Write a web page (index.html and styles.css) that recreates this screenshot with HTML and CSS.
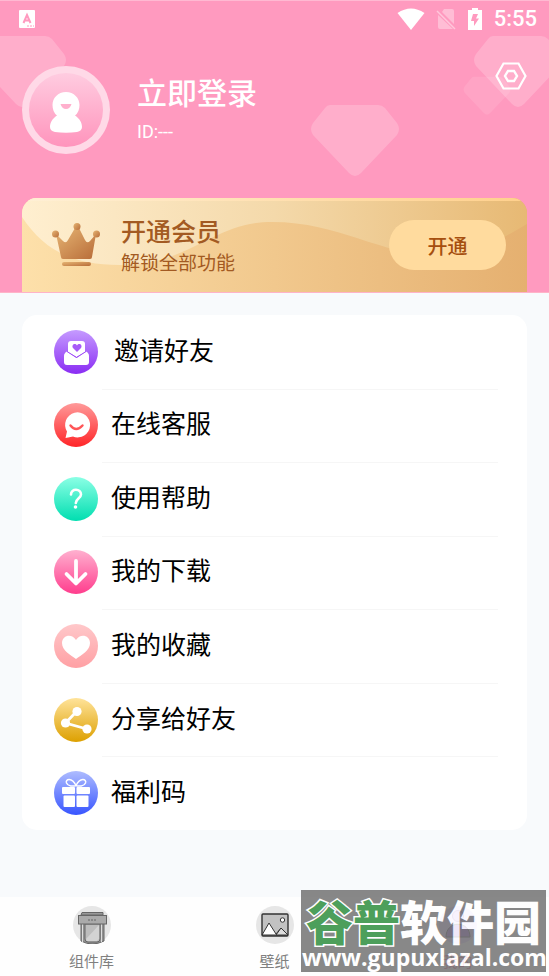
FILE: index.html
```html
<!DOCTYPE html>
<html lang="zh-CN">
<head>
<meta charset="utf-8">
<meta name="viewport" content="width=device-width, initial-scale=1">
<title>我的</title>
<link rel="stylesheet" href="styles.css">
</head>
<body>
<header class="hero">
  <svg class="gem gem-left" viewBox="0 0 90 74" aria-hidden="true"><use href="#gem"/></svg>
  <svg class="gem gem-center" viewBox="0 0 90 74" aria-hidden="true"><path id="gem" d="M20 1H68Q72 1 75 4L87 19Q91 25 87 31L51 69Q45 75 39 69L3 31Q-1 25 3 19L15 4Q17 1 20 1Z" fill="#fff" fill-opacity=".2"/></svg>
  <svg class="gem gem-right" viewBox="0 0 90 74" aria-hidden="true"><use href="#gem"/></svg>
  <svg class="gem gem-small" viewBox="0 0 90 74" aria-hidden="true"><use href="#gem"/></svg>

  <div class="status">
    <svg class="status-app" width="18" height="18" viewBox="0 0 18 18" aria-hidden="true"><rect x="1" width="16" height="18" rx="1" fill="#fff"/><path d="M5.500 13 9 5 12.500 13M6.500 10.500H11.500" fill="none" stroke="#ff9abf" stroke-width="2"/><path d="M9 16H16" stroke="#ff9abf" stroke-dasharray="2 1"/></svg>
    <svg width="28" height="22" viewBox="0 0 28 22" aria-hidden="true"><path d="M.500 5Q14-4 27.500 5L14 22Z" fill="#fff"/></svg>
    <svg width="20" height="22" viewBox="0 0 20 22" aria-hidden="true"><path d="M8 1H16Q18 1 18 3V16L6 4ZM2 7 17 21H4Q2 21 2 19Z" fill="#fff" opacity=".35"/><path d="M1 3 19 21" stroke="#fff" stroke-width="1.500" opacity=".45"/></svg>
    <svg width="16" height="22" viewBox="0 0 16 22" aria-hidden="true"><path d="M5 0H11V2H15V22H1V2H5Z" fill="#fff"/><path d="M6 6H11L9 10.500H12L7 18V13H4Z" fill="#ff9abf"/></svg>
    <time class="clock">5:55</time>
  </div>

  <div class="profile">
    <svg class="avatar" viewBox="0 0 88 88" role="img" aria-label="头像">
      <defs><linearGradient id="av" x2="0" y2="1"><stop stop-color="#ffcce0"/><stop offset="1" stop-color="#ff94bc"/></linearGradient></defs>
      <circle cx="44" cy="44" r="44" fill="#ffd9e7"/><circle cx="44" cy="44" r="37" fill="url(#av)"/>
      <path d="M44 26C36 26 30.500 32 30.500 39Q30.500 46 35 49.500C30 53 28 57 28 61Q28 65 33 66Q44 67.500 55 66Q60 65 60 61C60 57 58 53 53 49.500Q57.500 46 57.500 39C57.500 32 52 26 44 26Z" fill="#fff"/><path d="M38.500 38H49.500Q48 43 44 43T38.500 38Z" fill="#ffb0cd"/>
    </svg>
    <div class="who"><h1>立即登录</h1><p>ID:---</p></div>
    <button class="settings" type="button" aria-label="设置"><svg width="32" height="28" viewBox="0 0 32 28" aria-hidden="true"><g fill="none" stroke="#fff" stroke-width="2.200"><path d="M8.500 1.500H23.500L30.500 14 23.500 26.500H8.500L1.500 14Z"/><path d="M13 9H19L22 14 19 19H13L10 14Z" stroke-width="2.400"/></g></svg></button>
  </div>

  <section class="vip">
    <svg class="vip-wave" viewBox="0 0 505 94" preserveAspectRatio="none" aria-hidden="true">
      <defs><linearGradient id="wv"><stop stop-color="#ffefd0"/><stop offset=".5" stop-color="#f4d9aa"/><stop offset="1" stop-color="#e7b974"/></linearGradient></defs>
      <path d="M0 0H505V26C480 40 455 58 420 57C360 59 320 24 250 24C190 24 170 67 98 67C50 67 22 52 0 19Z" fill="url(#wv)"/>
    </svg>
    <svg class="crown" viewBox="0 0 48 44" aria-hidden="true">
      <defs><linearGradient id="cr" x2="1" y2="1"><stop stop-color="#e6b574"/><stop offset="1" stop-color="#b86c38"/></linearGradient></defs>
      <g fill="url(#cr)"><path d="M4 11 11 18Q14 21 16 17L23 5H27L33 17Q35 21 38 18L44 11 40 34Q40 36 38 36H11Q9 36 9 34Z"/><circle cx="3.500" cy="11" r="3.500"/><circle cx="25" cy="3.500" r="3.500"/><circle cx="44.500" cy="11" r="3.500"/><rect x="10" y="39" width="29" height="4" rx="2"/></g>
    </svg>
    <div class="vip-text"><h2>开通会员</h2><p>解锁全部功能</p></div>
    <button class="vip-button" type="button">开通</button>
  </section>
</header>

<main class="content">
  <ul class="menu">
    <li><a class="row row-first" href="#invite"><svg class="icon" viewBox="0 0 44 44" aria-hidden="true"><defs><linearGradient id="g1" x2="0" y2="1"><stop stop-color="#c59bff"/><stop offset="1" stop-color="#8a2df3"/></linearGradient></defs><circle cx="22" cy="22" r="22" fill="url(#g1)"/><path d="M14 22V14Q14 11 17 11H28Q31 11 31 14V22L22.500 27Z" fill="#fff"/><path d="M23 22 19 18C17 15 21 12 23 15.500C25 12 29 15 27 18Z" fill="#a75af8"/><path d="M13 21.500 22.500 28 32 21.500Q35 23 35 26V32Q35 35 32 35H13Q10 35 10 32V26Q10 23 13 21.500Z" fill="#fff"/><path d="M13 21.500 22.500 27.500 32 21.500" fill="none" stroke="#9c49f6"/></svg><span>邀请好友</span></a></li>
    <li><a class="row" href="#service"><svg class="icon" viewBox="0 0 44 44" aria-hidden="true"><defs><linearGradient id="g2" x2="0" y2="1"><stop stop-color="#ff9a9a"/><stop offset="1" stop-color="#ff2528"/></linearGradient></defs><circle cx="22" cy="22" r="22" fill="url(#g2)"/><path d="M11.500 35 13 28.500A12.500 12.500 0 1 1 19 33.500Z" fill="#fff"/><path d="M16.500 22.500Q22 29.500 28.500 22.500" fill="none" stroke="#ff5557" stroke-width="2.400" stroke-linecap="round"/></svg><span>在线客服</span></a></li>
    <li><a class="row" href="#help"><svg class="icon" viewBox="0 0 44 44" aria-hidden="true"><defs><linearGradient id="g3" x2="0" y2="1"><stop stop-color="#8bffe5"/><stop offset="1" stop-color="#00deb0"/></linearGradient></defs><circle cx="22" cy="22" r="22" fill="url(#g3)"/><path d="M17 17.500C17 11 27 11.500 27 17.500C27 21 22 21.500 21.800 26" fill="none" stroke="#fff" stroke-width="2.600" stroke-linecap="round"/><circle cx="21.500" cy="30" r="1.800" fill="#fff"/></svg><span>使用帮助</span></a></li>
    <li><a class="row" href="#downloads"><svg class="icon" viewBox="0 0 44 44" aria-hidden="true"><defs><linearGradient id="g4" x2="0" y2="1"><stop stop-color="#ffb0cf"/><stop offset="1" stop-color="#ff3d8d"/></linearGradient></defs><circle cx="22" cy="22" r="22" fill="url(#g4)"/><path d="M22 11V33M12.500 24 22 33.500 31.500 24" fill="none" stroke="#fff" stroke-width="3.800" stroke-linecap="round" stroke-linejoin="round"/></svg><span>我的下载</span></a></li>
    <li><a class="row" href="#favorites"><svg class="icon" viewBox="0 0 44 44" aria-hidden="true"><defs><linearGradient id="g5" x2="0" y2="1"><stop stop-color="#ffc8ca"/><stop offset="1" stop-color="#ffa0a4"/></linearGradient></defs><circle cx="22" cy="22" r="22" fill="url(#g5)"/><path d="M22 35C17 31 8 27 8 19C8 11 18 9 22 16C26 9 36 11 36 19C36 27 27 31 22 35Z" fill="#fff"/></svg><span>我的收藏</span></a></li>
    <li><a class="row" href="#share"><svg class="icon" viewBox="0 0 44 44" aria-hidden="true"><defs><linearGradient id="g6" x2="0" y2="1"><stop stop-color="#ffe39a"/><stop offset="1" stop-color="#dda000"/></linearGradient></defs><circle cx="22" cy="22" r="22" fill="url(#g6)"/><path d="M23 13 11.500 25 33 31" fill="none" stroke="#fff" stroke-width="2.800"/><g fill="#fff"><circle cx="23" cy="13.500" r="4.600"/><circle cx="11.500" cy="25" r="4.600"/><circle cx="33" cy="31" r="4.600"/></g></svg><span>分享给好友</span></a></li>
    <li><a class="row" href="#gift"><svg class="icon" viewBox="0 0 44 44" aria-hidden="true"><defs><linearGradient id="g7" x2="0" y2="1"><stop stop-color="#aebcff"/><stop offset="1" stop-color="#3855ff"/></linearGradient></defs><circle cx="22" cy="22" r="22" fill="url(#g7)"/><g fill="none" stroke="#fff" stroke-width="1.500"><path d="M22 14.500C18 6 11 8 12.500 12C14 15.500 19 15.500 22 14.500C26 6 33 8 31.500 12C30 15.500 25 15.500 22 14.500Z"/></g><g fill="#fff"><rect x="8" y="16" width="13" height="7" rx="1"/><rect x="22.500" y="16" width="13.500" height="7" rx="1"/><rect x="9.500" y="24.500" width="11.500" height="11.500" rx="1"/><rect x="22.500" y="24.500" width="12" height="11.500" rx="1"/></g></svg><span>福利码</span></a></li>
  </ul>
</main>

<nav class="tabs">
  <a class="tab" href="#widgets"><svg class="tab-icon" viewBox="0 0 38 38" aria-hidden="true"><circle cx="19" cy="19" r="19" fill="#e6e6e6"/><g stroke="#666"><path d="M8 17H31V35Q19 41 8 35Z" fill="#929292"/><path d="M9.500 18V36M28.500 18V36" stroke="#ddd"/><path d="M12 18H27V33Q27 36 24 36H15Q12 36 12 33Z" fill="#bdbdbd"/><path d="M13 33 26 19V33L24 35H14Z" fill="#d3d3d3" stroke="none"/><path d="M9 6.500H30V9H8Z" fill="#999"/><rect x="5.500" y="9.500" width="28" height="8.500" fill="#aaa"/><path d="M15 14H24" stroke-dasharray="2 1"/></g></svg><span>组件库</span></a>
  <a class="tab" href="#wallpaper"><svg class="tab-icon" viewBox="0 0 38 38" aria-hidden="true"><circle cx="19" cy="19" r="19" fill="#e6e6e6"/><rect x="6" y="8" width="26" height="22" rx="1" fill="#c2c2c2"/><path d="M6 29 13 17 20 28 25 22 32 29Z" fill="#fff" stroke="#333"/><path d="M20 29 25 22 32 29Z" fill="#ddd" stroke="#333"/><circle cx="26.500" cy="14" r="2.200" fill="#fff" stroke="#333"/><rect x="6" y="8" width="26" height="22" rx="1" fill="none" stroke="#333" stroke-width="1.400"/></svg><span>壁纸</span></a>
  <a class="tab tab-active" href="#me" aria-current="page"><svg class="tab-icon" viewBox="0 0 38 38" aria-hidden="true"><circle cx="19" cy="19" r="19" fill="#ddc8ff"/><path d="M7 31C7 14 31 14 31 31Z" fill="#7d3cc8" stroke="#222"/><circle cx="19" cy="10" r="5.500" fill="#c49bf5" stroke="#7040b0"/></svg><span>我的</span></a>
</nav>

<aside class="mark">
  <div class="mark-name"><span class="mark-green">谷普</span>软件园</div>
  <div class="mark-url">www.gupuxlazal.com</div>
</aside>
</body>
</html>
```
FILE: styles.css
```css
* { box-sizing: border-box; }

body {
  position: relative;
  display: flex;
  flex-direction: column;
  min-height: 100vh;
  margin: 0;
  background: #f8fafc;
  font-family: Roboto, "Noto Sans CJK SC", sans-serif;
  color: #000;
}

h1, h2, p, ul { margin: 0; padding: 0; }
a { color: inherit; text-decoration: none; }
button { border: 0; padding: 0; font-family: inherit; }
svg { display: block; flex: none; }

.hero {
  position: relative;
  overflow: hidden;
  padding: 0 22px;
  background: #ff9abf;
  border-top: 1px solid #ffb9d2;
  border-bottom: 1px solid #ffb3c8;
}

.gem { position: absolute; width: 90px; height: 74px; }
.gem-left { left: -23px; top: 34px; }
.gem-center { left: 310px; top: 103px; }
.gem-right { right: -14px; top: 34px; }
.gem-small { right: 38px; top: 75px; width: 48px; height: 40px; opacity: .5; }

.status {
  position: relative;
  display: flex;
  align-items: center;
  gap: 11px;
  height: 35px;
  margin-right: -10px;
  margin-left: -4px;
  color: #fff;
}
.status-app { margin-right: auto; }
.clock { font-size: 22px; line-height: 26px; font-weight: 500; }

.profile {
  position: relative;
  display: flex;
  align-items: center;
  margin-top: 30px;
  color: #fff;
}
.avatar { width: 88px; height: 88px; }
.who { flex: 1; padding: 0 0 4px 27px; }
.who h1 { font-size: 30px; line-height: 44px; font-weight: 500; }
.who p { margin-top: 4px; font-size: 18px; line-height: 24px; }
.settings {
  align-self: flex-start;
  margin-top: -4px;
  padding: 0;
  background: none;
}

.vip {
  position: relative;
  display: flex;
  align-items: center;
  height: 94px;
  margin-top: 44px;
  padding: 0 21px 0 30px;
  overflow: hidden;
  border-radius: 15px 15px 0 0;
  background: linear-gradient(90deg, #fde0aa, #e5b070);
  color: #a35a22;
}
.vip::after {
  content: "";
  position: absolute;
  top: 0;
  left: 0;
  right: 0;
  height: 3px;
  background: linear-gradient(90deg, #fff0d6, #ffd08c);
}
.vip-wave { position: absolute; inset: 0; width: 100%; height: 100%; }
.crown { position: relative; width: 48px; height: 44px; }
.vip-text { position: relative; flex: 1; padding: 3px 0 0 21px; }
.vip-text h2 { font-size: 25px; line-height: 34px; font-weight: 500; }
.vip-text p { font-size: 19px; line-height: 28px; }
.vip-button {
  position: relative;
  width: 117px;
  height: 50px;
  border-radius: 25px;
  background: #ffdb9e;
  color: #a64f0f;
  font-size: 20px;
  font-weight: 500;
}

.content {
  display: flex;
  flex: 1;
  padding: 22px 22px 67px;
}
.menu {
  display: grid;
  flex: 1;
  grid-auto-rows: 1fr;
  list-style: none;
  border-radius: 15px;
  background: #fff;
}
.menu li { display: grid; position: relative; min-height: 60px; }
.menu li + li::before {
  content: "";
  position: absolute;
  top: 0;
  left: 80px;
  right: 29px;
  height: 1px;
  background: #f6f6f6;
}
.row {
  display: flex;
  align-items: center;
  gap: 13px;
  padding: 0 32px;
  font-size: 25px;
  line-height: 36px;
}
.row-first { gap: 16px; }
.icon { width: 44px; height: 44px; }

.tabs {
  display: grid;
  grid-template-columns: repeat(3, 1fr);
  height: 79px;
  padding-top: 9px;
  background: #fefefe;
}
.tab {
  display: flex;
  flex-direction: column;
  align-items: center;
  gap: 7px;
  color: #808080;
  font-size: 15px;
  line-height: 22px;
}
.tab-icon { width: 38px; height: 38px; }
.tab-active { color: #e03a70; }

.mark {
  position: absolute;
  right: 3px;
  bottom: 4px;
  width: 245px;
  height: 82px;
  border: 1px solid #777;
  background: #787878;
  color: #fff;
  opacity: .88;
  text-align: center;
  white-space: nowrap;
}
.mark-name {
  padding-top: 3px;
  font-family: "Noto Sans CJK SC", sans-serif;
  font-size: 47px;
  line-height: 51px;
  font-weight: 900;
  font-style: oblique 8deg;
}
.mark-green {
  color: #359245;
  -webkit-text-stroke: 3px #fff;
  paint-order: stroke fill;
}
.mark-url {
  font-family: "Open Sans", sans-serif;
  font-size: 23px;
  line-height: 24px;
  font-weight: 700;
}
```
